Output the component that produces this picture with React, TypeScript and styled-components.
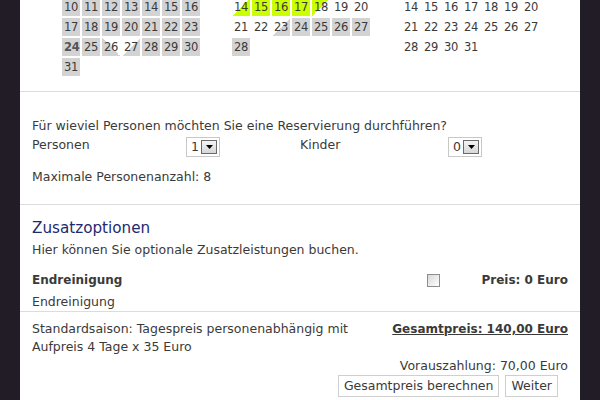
import React from "react";
import styled, { createGlobalStyle, css } from "styled-components";

const GlobalStyle = createGlobalStyle`
  html, body { margin: 0; padding: 0; background: #221c27; }
  body {
    font-family: "DejaVu Sans", Verdana, sans-serif;
    font-size: 12.5px;
    color: #3a3a3a;
  }
`;

const Page = styled.div`
  width: 560px;
  min-height: 400px;
  margin: 0 20px;
  background: #ffffff;
  overflow: hidden;
`;

const Section = styled.div<{ $pt: number; $pb: number }>`
  padding: ${(p) => p.$pt}px 12px ${(p) => p.$pb}px 12px;
  border-bottom: 1px solid #dcdcdc;
`;

const LastSection = styled.div`
  padding: 8px 12px 0 12px;
`;

const Calendars = styled.div`
  display: flex;
  gap: 32px;
  margin-top: -2px;
  padding: 0 0 15px 42px;
  border-bottom: 1px solid #dcdcdc;
`;

const Month = styled.div`
  display: grid;
  grid-template-columns: repeat(7, 18px);
  grid-auto-rows: 18px;
  gap: 2px;
`;

type DayKind = "none" | "busy" | "free" | "arr" | "dep" | "busyIn" | "busyOut" | "busyLow";

const GRAY = "#d3d3d3";
const GREEN = "#ccff00";

const dayBg = (k: DayKind) => {
  switch (k) {
    case "busy":
      return css`background: ${GRAY};`;
    case "free":
      return css`background: ${GREEN};`;
    case "arr":
      return css`background: linear-gradient(to bottom right, transparent 50%, ${GREEN} 50%);`;
    case "dep":
      return css`background: linear-gradient(to bottom right, ${GREEN} 50%, transparent 50%);`;
    case "busyIn":
      return css`background: linear-gradient(to bottom right, transparent 50%, ${GRAY} 50%);`;
    case "busyLow":
      return css`background: linear-gradient(to top right, ${GRAY} 50%, transparent 50%);`;
    case "busyOut":
      return css`background: linear-gradient(to bottom right, ${GRAY} 50%, transparent 50%);`;
    default:
      return css`background: transparent;`;
  }
};

const Day = styled.div<{ $kind: DayKind; $today?: boolean }>`
  ${(p) => dayBg(p.$kind)}
  font-size: 11.5px;
  line-height: 18px;
  padding-left: 2px;
  color: ${(p) => (p.$today ? "#555" : "#3a3a3a")};
  font-weight: ${(p) => (p.$today ? "bold" : "normal")};
  letter-spacing: -0.3px;
`;

const Text = styled.div`
  line-height: 18px;
`;

const PersonRow = styled.div`
  display: grid;
  grid-template-columns: 154px 114px 148px auto;
  align-items: start;
  margin-top: 1px;
  margin-bottom: 11px;
`;

const SelectBox = styled.div`
  width: 34px;
  height: 20px;
  box-sizing: border-box;
  border: 1px solid #c8c8c8;
  display: flex;
  align-items: center;
  justify-content: flex-end;
  gap: 2px;
  padding-right: 2px;
  margin-top: 1px;
  line-height: 14px;
`;

const SelectBtn = styled.div`
  width: 16px;
  height: 14px;
  box-sizing: border-box;
  border: 1px solid #6a6a6a;
  background: linear-gradient(#f4f4f4, #d6d6d6);
  display: flex;
  align-items: center;
  justify-content: center;
`;

const Heading = styled.h2`
  margin: 0;
  font-size: 15.2px;
  font-weight: normal;
  color: #1c2a6e;
  line-height: 18px;
`;

const OptionRow = styled.div`
  display: grid;
  grid-template-columns: 1fr 13px 128px;
  align-items: center;
  margin-top: 12px;
  line-height: 18px;
`;

const Bold = styled.span`
  font-weight: bold;
  font-size: 12px;
  color: #3a3a3a;
`;

const Checkbox = styled.div`
  width: 13px;
  height: 13px;
  box-sizing: border-box;
  border: 1px solid #8e8e8e;
  background: linear-gradient(135deg, #d8d8d8, #ffffff);
`;

const Price = styled.div`
  text-align: right;
  font-weight: bold;
  font-size: 12px;
`;

const TotalRow = styled.div`
  display: flex;
  justify-content: space-between;
  align-items: flex-start;
`;

const TotalLeft = styled.div`
  width: 350px;
  line-height: 18px;
`;

const TotalPrice = styled.div`
  font-weight: bold;
  font-size: 12px;
  text-decoration: underline;
  line-height: 18px;
  color: #3a3a3a;
`;

const RightText = styled.div`
  text-align: right;
  line-height: 18px;
  margin-top: 1px;
`;

const Buttons = styled.div`
  display: flex;
  justify-content: flex-end;
  gap: 6px;
  padding-right: 10px;
`;

const Button = styled.button`
  font-family: inherit;
  font-size: 12.5px;
  color: #3a3a3a;
  background: #ffffff;
  border: 1px solid #cfcfcf;
  height: 22px;
  padding: 0 5px;
  line-height: 20px;
`;

const Arrow = () => (
  <svg width="7" height="4" viewBox="0 0 7 4">
    <path d="M0 0h7L3.5 4z" fill="#000" />
  </svg>
);

const Select = ({ value }: { value: string }) => (
  <SelectBox>
    <span>{value}</span>
    <SelectBtn>
      <Arrow />
    </SelectBtn>
  </SelectBox>
);

type D = [number, DayKind, boolean?];

const month1: D[] = [
  [10, "busy"], [11, "busy"], [12, "busy"], [13, "busy"], [14, "busy"], [15, "busy"], [16, "busy"],
  [17, "busy"], [18, "busy"], [19, "busy"], [20, "busy"], [21, "busy"], [22, "busy"], [23, "busy"],
  [24, "busy", true], [25, "busy"], [26, "busyLow"], [27, "busyIn"], [28, "busy"], [29, "busy"], [30, "busy"],
  [31, "busy"],
];

const month2: D[] = [
  [14, "arr"], [15, "free"], [16, "free"], [17, "free"], [18, "dep"], [19, "none"], [20, "none"],
  [21, "none"], [22, "none"], [23, "busyIn"], [24, "busy"], [25, "busy"], [26, "busy"], [27, "busy"],
  [28, "busy"],
];

const month3: D[] = Array.from({ length: 18 }, (_, i) => [14 + i, "none"] as D);

const MonthView = ({ days }: { days: D[] }) => (
  <Month>
    {days.map(([n, k, t]) => (
      <Day key={n} $kind={k} $today={t}>
        {n}
      </Day>
    ))}
  </Month>
);

export default function App() {
  return (
    <>
      <GlobalStyle />
      <Page>
        <Calendars>
          <MonthView days={month1} />
          <MonthView days={month2} />
          <MonthView days={month3} />
        </Calendars>

        <Section $pt={25} $pb={18}>
          <Text>Für wieviel Personen möchten Sie eine Reservierung durchführen?</Text>
          <PersonRow>
            <Text>Personen</Text>
            <Select value="1" />
            <Text>Kinder</Text>
            <Select value="0" />
          </PersonRow>
          <Text>Maximale Personenanzahl: 8</Text>
        </Section>

        <Section $pt={14} $pb={0}>
          <Heading>Zusatzoptionen</Heading>
          <Text style={{ marginTop: 4 }}>Hier können Sie optionale Zusatzleistungen buchen.</Text>
          <OptionRow>
            <Bold>Endreinigung</Bold>
            <Checkbox />
            <Price>Preis: 0 Euro</Price>
          </OptionRow>
          <Text style={{ marginTop: 4 }}>Endreinigung</Text>
        </Section>

        <LastSection>
          <TotalRow>
            <TotalLeft>
              Standardsaison: Tagespreis personenabhängig mit Aufpreis 4 Tage x 35 Euro
            </TotalLeft>
            <TotalPrice>Gesamtpreis: 140,00 Euro</TotalPrice>
          </TotalRow>
          <RightText>Vorauszahlung: 70,00 Euro</RightText>
          <Buttons>
            <Button>Gesamtpreis berechnen</Button>
            <Button>Weiter</Button>
          </Buttons>
        </LastSection>
      </Page>
    </>
  );
}
